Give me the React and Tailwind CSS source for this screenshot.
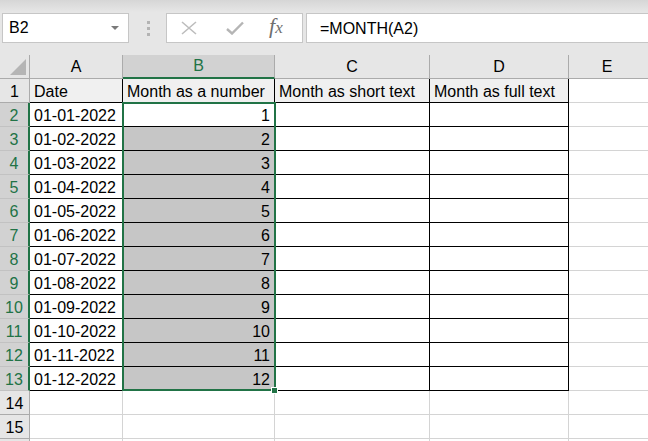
import React from "react";

const data = [
  ["Date", "Month as a number", "Month as short text", "Month as full text"],
  ...Array.from({ length: 12 }, (_, i) => [
    `01-${String(i + 1).padStart(2, "0")}-2022`,
    String(i + 1),
    "",
    "",
  ]),
];

function Toolbar() {
  return (
    <div className="h-[55px] bg-[linear-gradient(#d6d6d6,#e6e6e6_12px)] flex items-start pt-[13px]">
      <div className="ml-[2px] w-[127px] h-[30px] border border-[#c6c6c6] bg-white flex items-start justify-between">
        <span className="pl-[6px] pt-[5px] text-[16px] leading-[18px] text-black">B2</span>
        <svg width="8" height="5" viewBox="0 0 8 5" className="mt-[12px] mr-[9px]">
          <path d="M0 0 L8 0 L4 4 Z" fill="#7a7a7a" />
        </svg>
      </div>
      <div className="w-[37px] h-[30px] flex flex-col items-center justify-center gap-[3px] pl-[1px]">
        <div className="w-[3px] h-[3px] bg-[#b3b3b3]" />
        <div className="w-[3px] h-[3px] bg-[#b3b3b3]" />
        <div className="w-[3px] h-[3px] bg-[#b3b3b3]" />
      </div>
      <div className="w-[137px] h-[30px] border border-[#c6c6c6] bg-white flex items-center">
        <svg width="16" height="14" viewBox="0 0 16 14" className="ml-[14px]">
          <path d="M1 1 L15 13 M15 1 L1 13" stroke="#bdbdbd" strokeWidth="1.6" fill="none" />
        </svg>
        <svg width="18" height="14" viewBox="0 0 18 14" className="ml-[29px]">
          <path d="M1 8 L6 12.5 L17 1.5" stroke="#b5b5b5" strokeWidth="2.4" fill="none" />
        </svg>
        <span className="ml-[25px] font-['Liberation_Serif',serif] italic text-[22px] leading-[22px] text-[#6e6e6e] -mt-[2px]">
          f<span className="text-[17px]">x</span>
        </span>
      </div>
      <div className="ml-[3px] flex-1 h-[30px] border-y border-l border-[#c6c6c6] bg-white">
        <div className="pl-[13px] pt-[6px] text-[16px] leading-[18px] text-black">=MONTH(A2)</div>
      </div>
    </div>
  );
}

const W = ["w-[93px]", "w-[152px]", "w-[155px]", "w-[139px]"];

function HeaderRow() {
  const letters = ["A", "B", "C", "D"];
  return (
    <div className="flex h-[24px] bg-[#e6e6e6]">
      <div className="w-[30px] shrink-0 border-r border-b border-[#ababab] relative">
        <svg width="16" height="16" viewBox="0 0 16 16" className="absolute left-[10px] top-[4px]">
          <path d="M16 0 L16 16 L0 16 Z" fill="#b5b5b5" />
        </svg>
      </div>
      {letters.map((l, i) =>
        l === "B" ? (
          <div
            key={l}
            className={`${W[i]} shrink-0 flex items-center justify-center bg-[#d2d2d2] border-r border-r-[#ababab] border-b-2 border-b-[#217346] text-[#217346]`}
          >
            {l}
          </div>
        ) : (
          <div
            key={l}
            className={`${W[i]} shrink-0 flex items-center justify-center border-r border-b border-[#ababab] text-black`}
          >
            {l}
          </div>
        )
      )}
      <div className="flex-1 flex items-center justify-center border-b border-[#ababab] text-black pr-[3px]">
        E
      </div>
    </div>
  );
}

function BodyRow({ r }) {
  const inTable = r <= 13;
  const sel = r >= 2 && r <= 13;
  const vals = inTable ? data[r - 1] : ["", "", "", ""];
  return (
    <div className="flex h-[24px]">
      <div
        className={
          sel
            ? "w-[30px] shrink-0 flex items-end justify-center pb-[1px] bg-[#d2d2d2] text-[#217346] border-b border-b-[#c2c2c2] border-r-2 border-r-[#217346]"
            : "w-[30px] shrink-0 flex items-end justify-center pb-[1px] bg-[#e6e6e6] text-black border-b border-r border-[#ababab]"
        }
      >
        {r <= 15 ? r : ""}
      </div>
      {vals.map((v, i) => {
        let bg = "bg-white";
        if (r === 1 && inTable) bg = "bg-[#f0f0f0]";
        if (i === 1 && r >= 3 && r <= 13) bg = "bg-[#c6c6c6]";
        const border = inTable
          ? "border-r border-b border-black"
          : "border-r border-b border-[#d4d4d4]";
        const align = i === 1 && r >= 2 ? "justify-end pr-[4px]" : "justify-start pl-[4px]";
        return (
          <div
            key={i}
            className={`${W[i]} shrink-0 flex items-end pb-[1px] ${align} ${bg} ${border} text-black whitespace-nowrap overflow-hidden`}
          >
            {v}
          </div>
        );
      })}
      <div className="flex-1 bg-white border-b border-[#d4d4d4]" />
    </div>
  );
}

export default function App() {
  return (
    <div className="w-[648px] h-[441px] overflow-hidden bg-white font-['Liberation_Sans',Arial,sans-serif] text-[16px] leading-[18px]">
      <Toolbar />
      <div className="relative">
        <HeaderRow />
        {Array.from({ length: 16 }, (_, i) => (
          <BodyRow key={i} r={i + 1} />
        ))}
        <div className="absolute left-[122px] top-[47px] w-[154px] h-[289px] border-2 border-[#217346] pointer-events-none" />
        <div className="absolute left-[271px] top-[332px] w-[7px] h-[7px] bg-[#217346] border border-white" />
      </div>
    </div>
  );
}
